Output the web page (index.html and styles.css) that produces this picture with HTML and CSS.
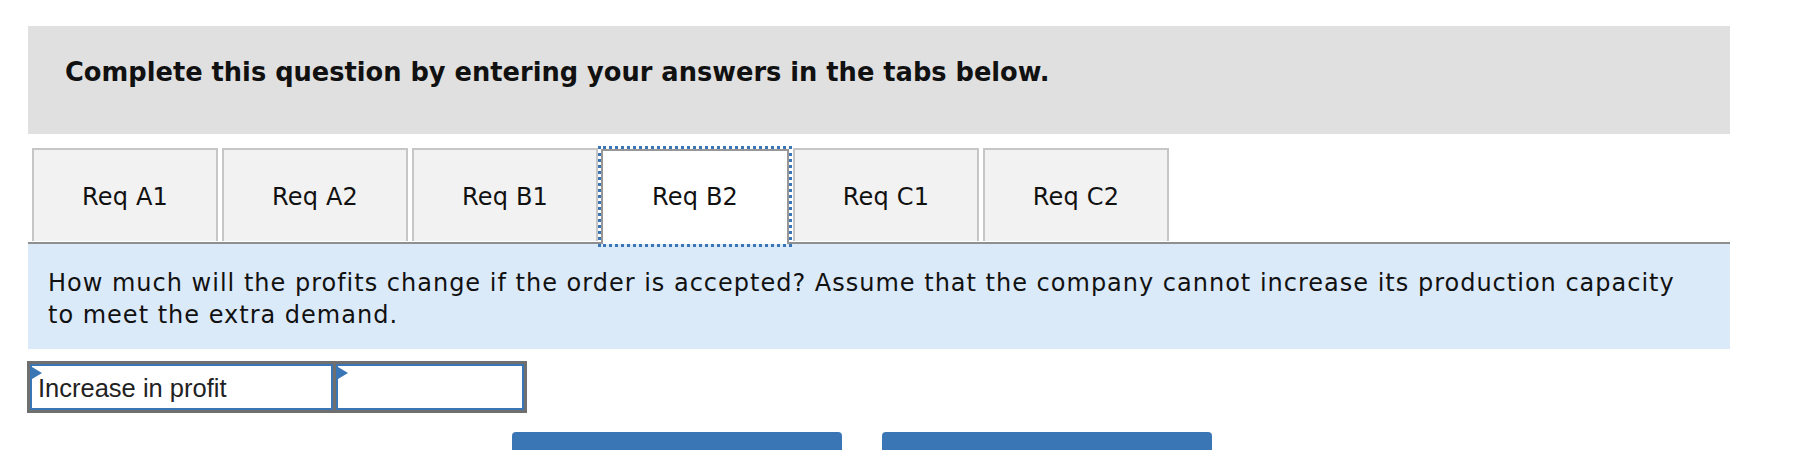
FILE: index.html
```html
<!DOCTYPE html>
<html lang="en">
<head>
    <meta charset="UTF-8">
    <title>Req B2</title>
    <link rel="stylesheet" href="styles.css">
</head>
<body>
    <div class="instructions">Complete this question by entering your answers in the tabs below.</div>

    <div class="tabs">
        <div class="tab">Req A1</div>
        <div class="tab">Req A2</div>
        <div class="tab">Req B1</div>
        <div class="tab tab-active">Req B2</div>
        <div class="tab">Req C1</div>
        <div class="tab">Req C2</div>
    </div>

    <div class="question">
        How much will the profits change if the order is accepted? Assume that the company cannot increase its production capacity<br>
        to meet the extra demand.
    </div>

    <div class="answer-table">
        <div class="cell cell-label">Increase in profit</div>
        <div class="cell cell-input"></div>
    </div>

    <div class="nav-buttons">
        <div class="nav-button"></div>
        <div class="nav-button"></div>
    </div>
</body>
</html>
```

FILE: styles.css
```css
* {
    box-sizing: border-box;
}
body {
    margin: 0;
    font-family: "DejaVu Sans", Verdana, sans-serif;
    color: #111;
    overflow: hidden;
}

/* header */
.instructions {
    margin: 26px 64px 0 28px;
    height: 108px;
    padding: 31px 0 0 37px;
    background-color: #e0e0e0;
    font-size: 25.7px;
    font-weight: bold;
    line-height: 30px;
}

/* tabs */
.tabs {
    display: flex;
    margin: 14px 64px 0 28px;
    padding-left: 4px;
    border-bottom: 2px solid #8f8f8f;
}
.tab {
    width: 186px;
    height: 93px;
    margin-right: 4px;
    display: flex;
    justify-content: center;
    align-items: center;
    border: 2px solid #c6c6c6;
    border-bottom: none;
    background-color: #f2f2f2;
    font-size: 24px;
    letter-spacing: 0.2px;
    padding-top: 2px;
}
.tab-active {
    width: 188px;
    height: 95px;
    margin: 1px 4px -2px -1px;
    padding: 0 0 2px;
    background-color: #fff;
    border-color: #979797;
    outline: 3px dotted #3a76b5;
    position: relative;
}

/* question text */
.question {
    margin: 0 64px 0 28px;
    padding: 23px 20px 18px;
    background-color: #dbeaf8;
    font-size: 24px;
    letter-spacing: 1px;
    line-height: 32px;
}

/* answer table */
.answer-table {
    display: flex;
    width: 500px;
    margin: 12px 0 0 27px;
    border: 3px solid #6f6f6f;
    background-color: #6f6f6f;
    gap: 3px;
}
.cell {
    position: relative;
    height: 46px;
    border: 2px solid #3a76b5;
    background-color: #fff;
}
.cell::before {
    content: "";
    position: absolute;
    top: 1px;
    left: 0;
    border-top: 6px solid transparent;
    border-bottom: 6px solid transparent;
    border-left: 10px solid #3a76b5;
}
.cell-label {
    width: 303px;
    padding: 7px 0 0 6px;
    font-family: "Liberation Sans", Arial, sans-serif;
    font-size: 25.5px;
    line-height: 30px;
    color: #222;
}
.cell-input {
    flex: 1;
}

/* bottom buttons */
.nav-buttons {
    display: flex;
    gap: 40px;
    margin-top: 19px;
    padding-left: 512px;
}
.nav-button {
    width: 330px;
    height: 50px;
    border-radius: 4px;
    background-color: #3a76b5;
}
```
